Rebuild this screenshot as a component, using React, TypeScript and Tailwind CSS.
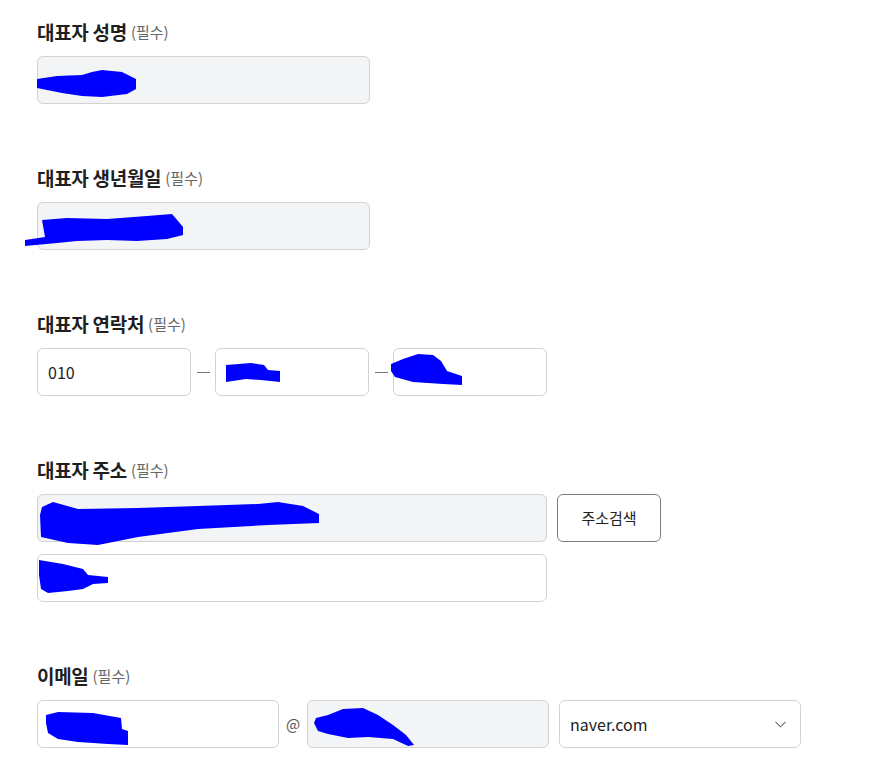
import React from 'react';

type Blob = { d: string; x: number; y: number; w: number; h: number };

// redaction marks, drawn over the fields
const Scribble: React.FC<{ blob: Blob }> = ({ blob }) => (
  <svg
    className="pointer-events-none absolute"
    style={{ left: blob.x, top: blob.y, width: blob.w, height: blob.h }}
    viewBox={`0 0 ${blob.w} ${blob.h}`}
    aria-hidden="true"
  >
    <path d={blob.d} fill="#0000ff" />
  </svg>
);

const Label: React.FC<{ text: string }> = ({ text }) => (
  <div className="mb-3 flex h-6 items-center">
    <span className="text-[19px] font-bold tracking-[-0.3px] text-[#1f1f1f]">{text}</span>
    <span className="ml-1 text-[15px] text-[#666]">(필수)</span>
  </div>
);

interface FieldProps {
  width: string;
  grey?: boolean;
  value?: string;
  blob?: Blob;
  children?: React.ReactNode;
}

const Field: React.FC<FieldProps> = ({ width, grey = false, value, blob, children }) => (
  <div
    className={`relative flex h-12 shrink-0 items-center rounded-md border border-[#d2d2d2] px-[10px] text-[16px] text-[#222] ${width} ${
      grey ? 'bg-[#f3f4f6]' : 'bg-white'
    }`}
  >
    {value && <span>{value}</span>}
    {children}
    {blob && <Scribble blob={blob} />}
  </div>
);

const Dash = () => (
  <div className="flex w-6 shrink-0 justify-center">
    <div className="h-px w-[13px] bg-[#777]" />
  </div>
);

export default function App() {
  return (
    <div className="min-h-screen bg-white pl-[37px] pt-5 font-['Noto_Sans_CJK_KR','Noto_Sans',sans-serif]">
      <section>
        <Label text="대표자 성명" />
        <Field
          width="w-[333px]"
          grey
          blob={{ x: -1, y: 0, w: 101, h: 44, d: 'M0 22 L20 19 L45 18 L55 15 L65 13 L85 15 L99 22 L99 32 L90 37 L65 40 L45 39 L25 36 L0 31 Z' }}
        />
      </section>

      <section className="mt-[62px]">
        <Label text="대표자 생년월일" />
        <Field
          width="w-[333px]"
          grey
          blob={{
            x: -13,
            y: 0,
            w: 160,
            h: 46,
            d: 'M0 37 L20 34 L17 17 L42 15 L82 16 L122 13 L147 11 L153 18 L158 24 L158 32 L142 36 L112 38 L82 37 L52 38 L32 40 L0 43 Z',
          }}
        />
      </section>

      <section className="mt-[62px]">
        <Label text="대표자 연락처" />
        <div className="flex items-center">
          <Field width="w-[154px]" value="010" />
          <Dash />
          <Field
            width="w-[154px]"
            blob={{ x: 9, y: 0, w: 57, h: 40, d: 'M1 16 L26 14 L39 16 L43 21 L55 22 L55 33 L36 31 L21 30 L1 33 Z' }}
          />
          <Dash />
          <Field
            width="w-[154px]"
            blob={{
              x: -3,
              y: 0,
              w: 74,
              h: 40,
              d: 'M0 15 L12 10 L27 5 L42 6 L50 12 L56 22 L71 27 L71 36 L52 35 L22 33 L4 28 L0 22 Z',
            }}
          />
        </div>
      </section>

      <section className="mt-[62px]">
        <Label text="대표자 주소" />
        <div className="flex items-center gap-[10px]">
          <Field
            width="w-[510px]"
            grey
            blob={{
              x: 2,
              y: 0,
              w: 282,
              h: 52,
              d: 'M2 12 L13 7 L38 14 L98 13 L158 11 L218 9 L238 7 L263 11 L279 19 L279 28 L228 30 L158 34 L98 42 L58 50 L28 48 L1 42 L0 20 Z',
            }}
          />
          <button
            type="button"
            className="h-12 w-[104px] rounded-md border border-[#7d7d7d] bg-white text-[15px] text-[#222]"
          >
            주소검색
          </button>
        </div>
        <div className="mt-3">
          <Field
            width="w-[510px]"
            blob={{
              x: 0,
              y: 0,
              w: 72,
              h: 42,
              d: 'M1 5 L25 9 L45 14 L50 20 L70 22 L70 28 L55 29 L45 34 L30 36 L10 38 L3 34 L1 20 Z',
            }}
          />
        </div>
      </section>

      <section className="mt-[62px]">
        <Label text="이메일" />
        <div className="flex items-center">
          <Field
            width="w-[242px]"
            blob={{
              x: 6,
              y: 0,
              w: 94,
              h: 48,
              d: 'M2 14 L14 11 L49 12 L77 17 L78 28 L84 30 L84 44 L64 43 L34 41 L14 38 L4 32 L2 22 Z',
            }}
          />
          <div className="flex w-7 shrink-0 justify-center text-[15px] text-[#555]">@</div>
          <Field
            width="w-[242px]"
            grey
            blob={{
              x: 5,
              y: 0,
              w: 104,
              h: 48,
              d: 'M3 17 L15 14 L30 8 L50 7 L65 14 L80 24 L93 34 L101 44 L95 45 L80 38 L55 36 L35 37 L15 33 L5 30 L1 22 Z',
            }}
          />
          <div className="w-[10px] shrink-0" />
          <Field width="w-[242px]">
            <span className="flex-1">naver.com</span>
            <svg width="11" height="7" viewBox="0 0 11 7" className="mr-[4px]" aria-hidden="true">
              <path d="M0.5 0.8 L5.5 5.8 L10.5 0.8" fill="none" stroke="#6b6b6b" strokeWidth="1.1" />
            </svg>
          </Field>
        </div>
      </section>
    </div>
  );
}
